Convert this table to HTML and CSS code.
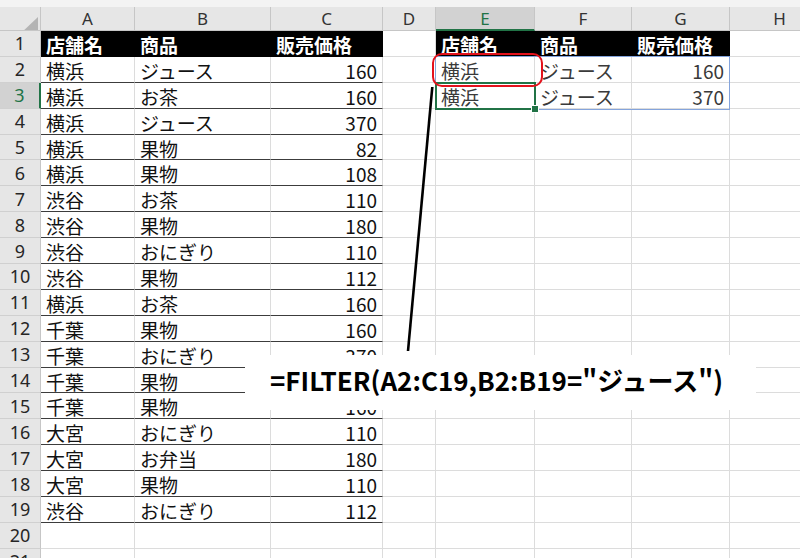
FILE: index.html
```html
<!DOCTYPE html>
<html lang="ja">
<head>
<meta charset="utf-8">
<link rel="stylesheet" href="styles.css">
</head>
<body>
<div class="sheet">
  <div class="strip"></div>
  <div class="row colhead">
    <div class="c ch corner"></div>
    <div class="c ch">A</div><div class="c ch">B</div><div class="c ch">C</div><div class="c ch">D</div>
    <div class="c ch sel">E</div><div class="c ch">F</div><div class="c ch">G</div><div class="c ch">H</div>
  </div>
  <div class="row">
    <div class="c rh">1</div>
    <div class="c hd">店舗名</div><div class="c hd">商品</div><div class="c hd">販売価格</div><div class="c"></div>
    <div class="c hd">店舗名</div><div class="c hd">商品</div><div class="c hd">販売価格</div><div class="c"></div>
  </div>
  <div class="row">
    <div class="c rh">2</div>
    <div class="c t">横浜</div><div class="c t">ジュース</div><div class="c t r">160</div><div class="c"></div>
    <div class="c sp">横浜</div><div class="c sp">ジュース</div><div class="c sp r">160</div><div class="c"></div>
  </div>
  <div class="row">
    <div class="c rh sel">3</div>
    <div class="c t">横浜</div><div class="c t">お茶</div><div class="c t r">160</div><div class="c"></div>
    <div class="c sp">横浜</div><div class="c sp">ジュース</div><div class="c sp r">370</div><div class="c"></div>
  </div>
  <div class="row">
    <div class="c rh">4</div>
    <div class="c t">横浜</div><div class="c t">ジュース</div><div class="c t r">370</div><div class="c"></div>
    <div class="c"></div><div class="c"></div><div class="c"></div><div class="c"></div>
  </div>
  <div class="row">
    <div class="c rh">5</div>
    <div class="c t">横浜</div><div class="c t">果物</div><div class="c t r">82</div><div class="c"></div>
    <div class="c"></div><div class="c"></div><div class="c"></div><div class="c"></div>
  </div>
  <div class="row">
    <div class="c rh">6</div>
    <div class="c t">横浜</div><div class="c t">果物</div><div class="c t r">108</div><div class="c"></div>
    <div class="c"></div><div class="c"></div><div class="c"></div><div class="c"></div>
  </div>
  <div class="row">
    <div class="c rh">7</div>
    <div class="c t">渋谷</div><div class="c t">お茶</div><div class="c t r">110</div><div class="c"></div>
    <div class="c"></div><div class="c"></div><div class="c"></div><div class="c"></div>
  </div>
  <div class="row">
    <div class="c rh">8</div>
    <div class="c t">渋谷</div><div class="c t">果物</div><div class="c t r">180</div><div class="c"></div>
    <div class="c"></div><div class="c"></div><div class="c"></div><div class="c"></div>
  </div>
  <div class="row">
    <div class="c rh">9</div>
    <div class="c t">渋谷</div><div class="c t">おにぎり</div><div class="c t r">110</div><div class="c"></div>
    <div class="c"></div><div class="c"></div><div class="c"></div><div class="c"></div>
  </div>
  <div class="row">
    <div class="c rh">10</div>
    <div class="c t">渋谷</div><div class="c t">果物</div><div class="c t r">112</div><div class="c"></div>
    <div class="c"></div><div class="c"></div><div class="c"></div><div class="c"></div>
  </div>
  <div class="row">
    <div class="c rh">11</div>
    <div class="c t">横浜</div><div class="c t">お茶</div><div class="c t r">160</div><div class="c"></div>
    <div class="c"></div><div class="c"></div><div class="c"></div><div class="c"></div>
  </div>
  <div class="row">
    <div class="c rh">12</div>
    <div class="c t">千葉</div><div class="c t">果物</div><div class="c t r">160</div><div class="c"></div>
    <div class="c"></div><div class="c"></div><div class="c"></div><div class="c"></div>
  </div>
  <div class="row">
    <div class="c rh">13</div>
    <div class="c t">千葉</div><div class="c t">おにぎり</div><div class="c t r">370</div><div class="c"></div>
    <div class="c"></div><div class="c"></div><div class="c"></div><div class="c"></div>
  </div>
  <div class="row">
    <div class="c rh">14</div>
    <div class="c t">千葉</div><div class="c t">果物</div><div class="c t r"></div><div class="c"></div>
    <div class="c"></div><div class="c"></div><div class="c"></div><div class="c"></div>
  </div>
  <div class="row">
    <div class="c rh">15</div>
    <div class="c t">千葉</div><div class="c t">果物</div><div class="c t r">160</div><div class="c"></div>
    <div class="c"></div><div class="c"></div><div class="c"></div><div class="c"></div>
  </div>
  <div class="row">
    <div class="c rh">16</div>
    <div class="c t">大宮</div><div class="c t">おにぎり</div><div class="c t r">110</div><div class="c"></div>
    <div class="c"></div><div class="c"></div><div class="c"></div><div class="c"></div>
  </div>
  <div class="row">
    <div class="c rh">17</div>
    <div class="c t">大宮</div><div class="c t">お弁当</div><div class="c t r">180</div><div class="c"></div>
    <div class="c"></div><div class="c"></div><div class="c"></div><div class="c"></div>
  </div>
  <div class="row">
    <div class="c rh">18</div>
    <div class="c t">大宮</div><div class="c t">果物</div><div class="c t r">110</div><div class="c"></div>
    <div class="c"></div><div class="c"></div><div class="c"></div><div class="c"></div>
  </div>
  <div class="row">
    <div class="c rh">19</div>
    <div class="c t">渋谷</div><div class="c t">おにぎり</div><div class="c t r">112</div><div class="c"></div>
    <div class="c"></div><div class="c"></div><div class="c"></div><div class="c"></div>
  </div>
  <div class="row">
    <div class="c rh">20</div>
    <div class="c"></div><div class="c"></div><div class="c"></div><div class="c"></div>
    <div class="c"></div><div class="c"></div><div class="c"></div><div class="c"></div>
  </div>
  <div class="row">
    <div class="c rh">21</div>
    <div class="c"></div><div class="c"></div><div class="c"></div><div class="c"></div>
    <div class="c"></div><div class="c"></div><div class="c"></div><div class="c"></div>
  </div>

  <div class="spill"></div>
  <div class="active"><span class="handle"></span></div>
  <div class="mark"></div>
  <svg class="pointer" width="800" height="558" viewBox="0 0 800 558">
    <line x1="432.3" y1="87" x2="408" y2="351" stroke="#000" stroke-width="2.6"/>
  </svg>
  <div class="callout">=FILTER(A2:C19,B2:B19="ジュース")</div>
</div>
</body>
</html>
```
FILE: styles.css
```css
html, body {
  margin: 0;
  padding: 0;
}
body {
  width: 800px;
  height: 558px;
  overflow: hidden;
  background: #fff;
  font-family: "Noto Sans CJK JP", sans-serif;
}
.sheet {
  position: relative;
  width: 800px;
  height: 558px;
  overflow: hidden;
}
.strip {
  height: 7px;
  background: #f3f3f3;
}
.row {
  display: grid;
  grid-template-columns: 41px 94px 136px 112px 53px 99px 97px 98px 100px;
  height: 25.9px;
}
.row.colhead {
  height: 24px;
}
.c {
  box-sizing: border-box;
  min-width: 0;
  border-right: 1px solid #dcdcdc;
  border-bottom: 1px solid #dcdcdc;
  padding: 0 5px;
  display: flex;
  align-items: center;
  font-size: 19px;
  line-height: 1;
  white-space: nowrap;
  overflow: hidden;
  color: #111;
  padding-top: 2px;
}
.ch {
  background: #e6e6e6;
  border-right-color: #c6c6c6;
  border-bottom-color: #c6c6c6;
  justify-content: center;
  font-family: "Noto Sans", sans-serif;
  font-size: 17px;
  color: #333;
  padding-top: 0;
}
.ch.sel {
  background: #d2d2d2;
  color: #217346;
  border-bottom: 2px solid #217346;
}
.corner {
  position: relative;
}
.corner::after {
  content: "";
  position: absolute;
  left: 20px;
  top: 10px;
  width: 18px;
  height: 17px;
  background: #b4b4b4;
  clip-path: polygon(100% 0, 100% 100%, 0 100%);
}
.rh {
  background: #e6e6e6;
  border-right-color: #c6c6c6;
  border-bottom-color: #d0d0d0;
  justify-content: center;
  font-family: "Noto Sans", sans-serif;
  font-size: 18px;
  color: #262626;
  padding: 0;
}
.rh.sel {
  background: #d2d2d2;
  color: #217346;
  border-right: 2px solid #217346;
}
.hd {
  background: #000;
  color: #fff;
  font-weight: bold;
  border-right-color: #000;
  border-bottom-color: #000;
}
.t {
  border-bottom-color: #3c3c3c;
}
.r {
  justify-content: flex-end;
}
.sp {
  color: #3a3a3a;
}
.spill {
  position: absolute;
  left: 435px;
  top: 56px;
  width: 295px;
  height: 54px;
  box-sizing: border-box;
  border: 1px solid #84a4dc;
}
.active {
  position: absolute;
  left: 435px;
  top: 82px;
  width: 101px;
  height: 28px;
  box-sizing: border-box;
  border: 2px solid #217346;
}
.handle {
  position: absolute;
  right: -5px;
  bottom: -5px;
  width: 6px;
  height: 6px;
  background: #217346;
  border: 1px solid #fff;
}
.mark {
  position: absolute;
  left: 432px;
  top: 53px;
  width: 111px;
  height: 34px;
  box-sizing: border-box;
  border: 2px solid #e3121c;
  border-radius: 10px;
}
.pointer {
  position: absolute;
  left: 0;
  top: 0;
}
.callout {
  position: absolute;
  left: 245px;
  top: 355px;
  width: 511px;
  height: 55px;
  box-sizing: border-box;
  background: #fff;
  padding: 0 0 6px 25px;
  display: flex;
  align-items: center;
  font-size: 26px;
  font-weight: bold;
  color: #000;
  white-space: nowrap;
}
```
